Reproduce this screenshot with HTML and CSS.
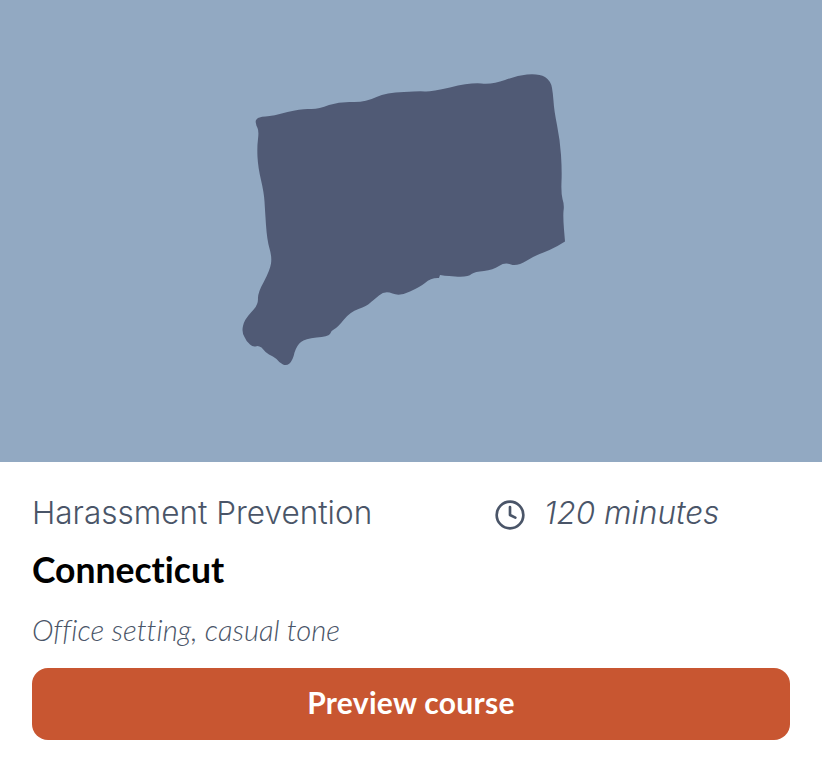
FILE: index.html
```html
<!DOCTYPE html>
<html lang="en">
<head>
  <meta charset="UTF-8">
  <meta name="viewport" content="width=device-width, initial-scale=1.0">
  <title>Harassment Prevention - Connecticut</title>
  <link rel="stylesheet" href="styles.css">
</head>
<body>
  <div class="course-card">
    <div class="course-map">
      <svg class="state-shape" viewBox="0 0 822 462" aria-label="Map of Connecticut">
        <path d="M256 123.5 Q255 120 257 119 Q258 117 265.5 116.5 Q273 116 287.5 112 Q302 108.5 310 109 Q318 109.5 329 105 Q340 101.5 352.5 102 Q365 102.5 376.5 97 Q386 92.5 404 92 Q420 91 425 91.5 Q430 92 450 87.5 Q470 82.5 481.5 83.5 Q493 84.5 505 80 Q517 75.5 527 74.5 Q539 73.5 545 77 Q551 81 552 88 Q553 94 553.5 101 Q554 110 557 125 Q560 140 561 155 Q562 170 561.5 181.5 Q561 193 562.5 199 Q564.5 205 563.5 211 Q563 217 564 229.5 L565 241.5 L557.5 246 Q550 250 543.5 252.5 Q537 254.5 527 260.5 Q517 266.5 511 264.5 Q505 262 499 266 Q493 270 484 271 Q475 271.5 471.5 274 Q468 277.5 455 276.5 Q442 275.5 440 275 L439 278 Q431 277.5 425 283 Q420 287 410 291.5 Q400 296.5 392.5 293.5 Q385 290 379 295.5 Q373 300.5 370 303 Q367 306 358.5 309 Q350 312 344 319.5 Q338 327 334.5 329 Q331 330.5 330 334 Q328 336.5 316.5 337.5 Q305 338.5 301 342 Q297 345 294.5 352.5 Q293 360 289.5 363.5 Q286.5 366 283 364.5 Q279.5 363 276.5 359 Q273 356 269 354.5 Q265 352 261.5 347.5 Q258 345 255.5 346.5 Q252.5 347 250 344.5 Q246.5 342 244.5 337 Q241.5 332 243 326 Q244 320 251 312.5 Q258 306 258 299 Q257.5 293 264 281.5 Q270 270 271 263.5 Q272 257 269.5 248.5 Q267 240 266 225 Q265 210 264.5 201.5 Q264 193 261 180 Q258 167 257.5 157 Q257 147 258 139 Q259 131 257.5 128 Q256 125 256 123.5 Z"/>
      </svg>
    </div>
    <div class="course-info">
      <div class="course-meta">
        <span class="course-type">Harassment Prevention</span>
        <span class="course-time">
          <svg class="clock-icon" viewBox="0 0 24 24" fill="none" stroke="currentColor" stroke-width="2" stroke-linecap="round" stroke-linejoin="round">
            <circle cx="12" cy="12" r="10"/>
            <path d="M12 6v6l4 2"/>
          </svg>
          120 minutes
        </span>
      </div>
      <h2 class="course-state">Connecticut</h2>
      <p class="course-setting">Office setting, casual tone</p>
      <button class="preview-btn">Preview course</button>
    </div>
  </div>
</body>
</html>
```

FILE: styles.css
```css
body {
  font-family: 'Inter', 'Liberation Sans', sans-serif;
  margin: 0;
  padding: 0;
  background-color: white;
  color: #4a5568;
  font-variant-ligatures: none;
}

.course-map {
  height: 462px;
  background-color: #92a9c2;
}

.state-shape {
  display: block;
  width: 100%;
  height: 100%;
  fill: #505a75;
}

.course-info {
  padding: 29px 32px 26px;
}

.course-meta {
  display: flex;
  align-items: center;
  height: 42px;
}

.course-type {
  width: 462px;
  font-size: 31.5px;
  font-weight: 300;
}

.course-time {
  display: flex;
  align-items: center;
  gap: 18px;
  font-size: 31.5px;
  font-weight: 300;
  font-style: italic;
}

.clock-icon {
  width: 32px;
  height: 32px;
  margin-top: 6px;
}

.course-state {
  margin: 15px 0 0;
  font-family: 'Lato', sans-serif;
  font-size: 35.5px;
  font-weight: 700;
  line-height: 44px;
  color: black;
}

.course-setting {
  margin: 20px 0 0;
  font-family: 'Lato', sans-serif;
  font-size: 29.2px;
  font-weight: 300;
  font-style: italic;
  line-height: 36px;
}

.preview-btn {
  display: block;
  width: 100%;
  height: 72px;
  margin-top: 20px;
  padding: 0 0 5px;
  border: none;
  border-radius: 16px;
  background-color: #c85631;
  color: white;
  font-family: 'Lato', sans-serif;
  font-size: 30px;
  font-weight: 700;
  letter-spacing: 0.3px;
  cursor: pointer;
}
```
